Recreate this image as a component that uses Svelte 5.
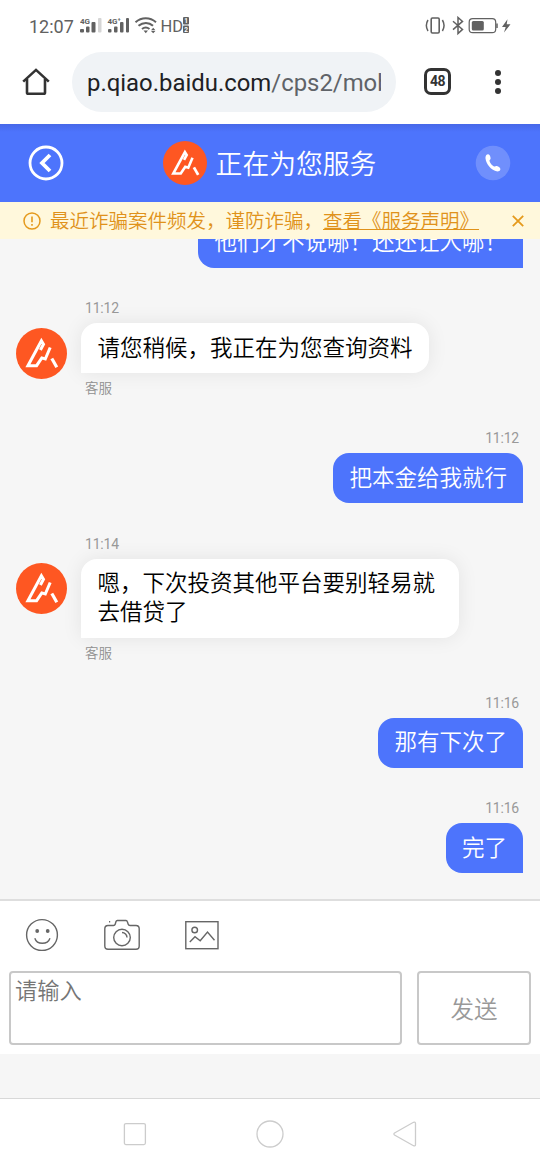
<script lang="ts">
	type Message = { from: 'agent' | 'user'; time: string; text: string };

	const messages: Message[] = [
		{ from: 'user', time: '11:12', text: '他们才不说哪！还还让人哪！' },
		{ from: 'agent', time: '11:12', text: '请您稍候，我正在为您查询资料' },
		{ from: 'user', time: '11:12', text: '把本金给我就行' },
		{ from: 'agent', time: '11:14', text: '嗯，下次投资其他平台要别轻易就去借贷了' },
		{ from: 'user', time: '11:16', text: '那有下次了' },
		{ from: 'user', time: '11:16', text: '完了' }
	];

	let draft = $state('');
</script>

{#snippet logo()}
	<svg class="logo" viewBox="0 0 51 51">
		<circle cx="25.5" cy="25.5" r="25.5" fill="#fe5722" />
		<g fill="none" stroke="#fff" stroke-width="3">
			<path d="M24.4 22L27.5 16.2L25.4 12.8L11.9 37.7H20.6L25.8 29.9L29.3 31L34.2 19.5" />
			<path d="M35.8 30.5L40.8 39.2" stroke-width="3.2" />
		</g>
	</svg>
{/snippet}

<div class="phone">
	<div class="status">
		<span class="clock">12:07</span>
		<svg class="signals" width="112" height="20" viewBox="0 0 112 20" fill="#616161">
			<text x="0" y="7.5" class="tiny">4G</text>
			<rect x="0" y="13" width="4" height="3.5" rx="1" />
			<rect x="6" y="10.5" width="3.5" height="6" rx="1" />
			<rect x="11.5" y="6" width="4" height="10.5" rx="1" />
			<rect x="18" y="2" width="3.5" height="14.5" rx="1" fill="#d5d5d5" />
			<text x="27.5" y="7.5" class="tiny">4G⁺</text>
			<rect x="28" y="13" width="3.5" height="3.5" rx="1" />
			<rect x="34" y="10.5" width="3.5" height="6" rx="1" />
			<rect x="40" y="6" width="3.5" height="10.5" rx="1" />
			<rect x="46" y="2" width="3" height="14.5" rx="1" />
			<g fill="none" stroke="#616161" stroke-width="2">
				<path d="M55.5 6.2C61.5 .9 70 .9 76 6.2" />
				<path d="M58.5 9.8C63 6 69 6 73 9.8" />
				<path d="M62 13C64.5 11 67 11 69.5 13" />
			</g>
			<path d="M63.5 14.5H68L65.8 17.3ZM71 14.2L73.2 11.8L75.4 14.2ZM71 15H75.4L73.2 17.3Z" />
			<text x="80.5" y="16" class="hd">HD</text>
			<rect x="103" y="1" width="6" height="7.5" rx="1" />
			<rect x="103" y="9.5" width="6" height="7.5" rx="1" />
			<text x="104.3" y="7.3" class="sim">1</text>
			<text x="104.3" y="15.8" class="sim">2</text>
		</svg>
		<svg class="power" width="88" height="20" viewBox="0 0 88 20" fill="none" stroke="#616161">
			<rect x="7.2" y="2" width="8" height="15" rx="1.2" stroke-width="1.6" />
			<path d="M4 4Q.7 9.5 4 15M18.4 4Q21.7 9.5 18.4 15" stroke-width="1.5" />
			<path d="M29 5.3L38.5 13.4L34 17.5V1.5L38.5 5.4L29 13.6" stroke-width="1.5" />
			<rect x="45.2" y="2.7" width="26.5" height="14" rx="3.5" stroke-width="1.2" />
			<rect x="47.8" y="5" width="12" height="9.5" rx="1.5" fill="#616161" stroke="none" />
			<path d="M73 7.5V12" stroke-width="1.5" />
			<path d="M83.5 3.3L78 11H81.7L80 16.5L86.5 8.3H82.7Z" fill="#616161" stroke="none" />
		</svg>
	</div>

	<div class="browser">
		<svg class="home" width="28" height="28" viewBox="0 0 28 28" fill="none" stroke="#333" stroke-width="2.6">
			<path d="M1.2 13.6L14 1.9L26.8 13.6" />
			<path d="M5 11V24.5Q5 25.8 6.3 25.8H21.7Q23 25.8 23 24.5V11" />
		</svg>
		<div class="address">
			<div class="url">p.qiao.baidu.com<span>/cps2/mobileChat</span></div>
		</div>
		<div class="tabs">48</div>
		<svg class="menu" width="8" height="26" viewBox="0 0 8 26" fill="#333">
			<circle cx="4" cy="4" r="3" />
			<circle cx="4" cy="13" r="3" />
			<circle cx="4" cy="22" r="3" />
		</svg>
	</div>

	<header>
		<svg width="36" height="36" viewBox="0 0 36 36" fill="none" stroke="#fff">
			<circle cx="18" cy="18" r="16" stroke-width="2.8" />
			<path d="M22 10L14 18L22 26" stroke-width="3.8" />
		</svg>
		<div class="title">
			{@render logo()}
			<h1>正在为您服务</h1>
		</div>
		<svg width="36" height="36" viewBox="0 0 36 36">
			<circle cx="18" cy="18" r="17.3" fill="#fff" opacity=".2" />
			<path
				fill="#fff"
				d="M13.2 9.2C14.8 9.2 15.5 11.5 15.6 13.6C15.6 14.8 14.3 14.8 14.5 16C14.9 18 17.2 20.6 19 21.4C20.2 21.9 20.6 20.7 21.8 20.9C23.6 21.3 25.6 22.9 25.4 24.2C25.1 25.9 23.2 26.8 21.4 26.3C16 24.7 11.3 19.2 10.5 13.4C10.2 11.4 11.3 9.2 13.2 9.2Z"
			/>
		</svg>
	</header>

	<div class="notice">
		<svg width="18" height="18" viewBox="0 0 18 18" fill="none" stroke="#e59a1c">
			<circle cx="9" cy="9" r="8" stroke-width="1.5" />
			<path d="M9 4.5V10.3M9 12V13.8" stroke-width="1.6" />
		</svg>
		<p>最近诈骗案件频发，谨防诈骗，<a href="#statement">查看《服务声明》</a></p>
		<svg class="close" width="12" height="12" viewBox="0 0 12 12" stroke="#e59a1c" stroke-width="1.8">
			<path d="M.8 .8L11.2 11.2M11.2 .8L.8 11.2" />
		</svg>
	</div>

	<main>
		{#each messages as message}
			<div class="message {message.from}">
				{#if message.from === 'agent'}
					<div class="avatar">{@render logo()}</div>
				{/if}
				<div class="body">
					<time>{message.time}</time>
					<div class="bubble">{message.text}</div>
					{#if message.from === 'agent'}
						<div class="label">客服</div>
					{/if}
				</div>
			</div>
		{/each}
	</main>

	<footer>
		<div class="tools">
			<svg width="34" height="34" viewBox="0 0 34 34" fill="none" stroke="#666" stroke-width="1.4">
				<circle cx="17" cy="17" r="15.4" />
				<path d="M9.8 20.2C12 27 22.6 27 25 20.2" />
				<circle cx="12.2" cy="13" r="1.9" fill="#666" stroke="none" />
				<circle cx="22.7" cy="13" r="1.9" fill="#666" stroke="none" />
			</svg>
			<svg width="36" height="34" viewBox="0 0 36 34" fill="none" stroke="#666" stroke-width="1.4">
				<path
					d="M4 7.5H9.5Q10.8 7.5 11.2 6.2L12 3.5Q12.3 2.5 13.3 2.5H22Q23 2.5 23.3 3.5L24.2 6.2Q24.6 7.5 26 7.5H32Q35.2 7.5 35.2 10.7V28Q35.2 31.2 32 31.2H4Q.8 31.2 .8 28V10.7Q.8 7.5 4 7.5Z"
				/>
				<path d="M5 3.8H6.2" />
				<circle cx="18" cy="19.5" r="8.3" />
				<path d="M18 14.5A5 5 0 0 1 23 19.5" />
			</svg>
			<svg width="34" height="34" viewBox="0 0 34 34" fill="none" stroke="#666" stroke-width="1.4">
				<rect x=".8" y="3.7" width="32.2" height="27" />
				<circle cx="9.7" cy="12" r="2.8" />
				<path d="M4.8 24L10 18.8L15.2 22.8L22.5 14L29.5 22.3" />
			</svg>
		</div>
		<div class="compose">
			<textarea placeholder="请输入" bind:value={draft}></textarea>
			<button>发送</button>
		</div>
	</footer>

	<nav>
		<svg width="28" height="28" viewBox="0 0 28 28">
			<rect x="3.4" y="3.6" width="21" height="21" rx="1.5" />
		</svg>
		<svg width="28" height="28" viewBox="0 0 28 28">
			<circle cx="14" cy="14" r="13" />
		</svg>
		<svg width="28" height="28" viewBox="0 0 28 28">
			<path d="M3.5 13L22.5 2.3Q24.5 1.5 24.5 3.5V24.5Q24.5 26.5 22.5 25.7L3.5 15Q2.3 14 3.5 13Z" />
		</svg>
	</nav>
</div>

<style>
	:global(body) {
		margin: 0;
		background: #f6f6f6;
	}

	.phone {
		display: flex;
		flex-direction: column;
		width: 540px;
		height: 1170px;
		overflow: hidden;
		background: #f6f6f6;
		font-family: Roboto, 'Noto Sans CJK SC', sans-serif;
	}

	svg {
		display: block;
		flex: none;
	}

	.status {
		display: flex;
		align-items: center;
		flex: none;
		height: 52px;
		padding: 0 28px 0 29px;
		box-sizing: border-box;
		background: #fff;
		color: #616161;
	}

	.clock {
		width: 51px;
		font-size: 18px;
	}

	.tiny {
		font-size: 8px;
		font-weight: 700;
	}

	.hd {
		font-size: 16.5px;
	}

	.sim {
		font-size: 6.5px;
		font-weight: 700;
		fill: #fff;
	}

	.power {
		margin-left: auto;
	}

	.browser {
		display: flex;
		flex: none;
		height: 72px;
		align-items: flex-start;
		background: #fff;
	}

	.home {
		margin: 16px 22px 0;
	}

	.address {
		width: 324px;
		height: 60px;
		padding: 0 15px;
		box-sizing: border-box;
		border-radius: 30px;
		background: #f0f3f6;
	}

	.url {
		overflow: hidden;
		white-space: nowrap;
		font-size: 23.9px;
		line-height: 62px;
		color: #202124;
	}

	.url span {
		color: #5f6368;
	}

	.tabs {
		width: 27px;
		height: 27px;
		margin: 16px 0 0 28px;
		box-sizing: border-box;
		border: 3px solid #333;
		border-radius: 7px;
		font-size: 14px;
		font-weight: 700;
		line-height: 21px;
		letter-spacing: -0.5px;
		text-align: center;
		color: #333;
	}

	.menu {
		margin: 17px 0 0 42.5px;
	}

	header {
		display: flex;
		align-items: center;
		justify-content: space-between;
		flex: none;
		height: 78px;
		padding: 0 29px 0 28px;
		box-sizing: border-box;
		background: linear-gradient(#4768e8, #4d74fc 8px);
	}

	.title {
		display: flex;
		align-items: center;
		gap: 9px;
	}

	.title .logo {
		width: 44px;
		height: 44px;
	}

	h1 {
		margin: 0;
		padding-top: 4px;
		font-size: 26.8px;
		font-weight: 350;
		line-height: 40px;
		color: #fff;
	}

	.notice {
		display: flex;
		align-items: center;
		flex: none;
		height: 37px;
		padding: 0 16px 0 23px;
		box-sizing: border-box;
		background: #fff8dc;
		color: #e0921a;
	}

	.notice p {
		margin: 0 0 0 9px;
		padding-top: 2px;
		font-size: 19.5px;
		font-weight: 350;
		line-height: 35px;
		white-space: nowrap;
	}

	.notice a {
		color: inherit;
	}

	.close {
		margin-left: auto;
	}

	main {
		display: flex;
		flex: none;
		flex-direction: column;
		justify-content: flex-end;
		gap: 31.25px;
		height: 660px;
		padding: 0 17px 25.9px 16px;
		box-sizing: border-box;
		overflow: hidden;
	}

	.message {
		display: flex;
		flex: none;
	}

	.user {
		justify-content: flex-end;
	}

	.avatar {
		width: 51px;
		height: 51px;
		margin: 28.8px 14px 0 0;
	}

	.avatar .logo {
		width: 51px;
		height: 51px;
	}

	.body {
		display: flex;
		flex-direction: column;
		align-items: flex-start;
	}

	.user .body {
		align-items: flex-end;
	}

	time {
		height: 24px;
		padding: 0 4px;
		font-size: 14px;
		line-height: 19px;
		letter-spacing: -0.2px;
		color: #999;
	}

	.bubble {
		max-width: 378px;
		padding: 10.5px 16.5px;
		box-sizing: border-box;
		border-radius: 16px 16px 16px 0;
		background: #fff;
		box-shadow: 0 0 20px rgba(0, 0, 0, 0.08);
		font-size: 22.5px;
		font-weight: 350;
		line-height: 29px;
		color: #000;
	}

	.user .bubble {
		padding: 10.5px 16px;
		border-radius: 16px 16px 0 16px;
		background: #4d74fc;
		box-shadow: none;
		color: #fff;
	}

	.label {
		height: 25px;
		padding: 0 4px;
		font-size: 13.5px;
		font-weight: 350;
		line-height: 31px;
		color: #909090;
	}

	footer {
		flex: none;
		height: 155px;
		box-sizing: border-box;
		border-top: 2px solid #dedede;
		background: #fff;
	}

	.tools {
		display: flex;
		gap: 45px;
		height: 70px;
		padding: 16.5px 25px 0;
		box-sizing: border-box;
	}

	.compose {
		display: flex;
		gap: 15px;
		padding: 0 9px;
	}

	textarea {
		width: 393px;
		height: 74px;
		padding: 2px 4px;
		box-sizing: border-box;
		border: 2px solid #c8c8c8;
		border-radius: 4px;
		font: 350 22.3px/32px Roboto, 'Noto Sans CJK SC', sans-serif;
		resize: none;
	}

	textarea::placeholder {
		color: #757575;
	}

	button {
		width: 114px;
		height: 74px;
		padding: 0;
		border: 2px solid #c8c8c8;
		border-radius: 4px;
		background: #fff;
		font: 350 23.5px Roboto, 'Noto Sans CJK SC', sans-serif;
		color: #999;
	}

	nav {
		display: flex;
		align-items: center;
		justify-content: center;
		flex: none;
		gap: 107px;
		height: 72px;
		margin-top: auto;
		padding: 0 1px 2px 0;
		box-sizing: border-box;
		border-top: 1px solid #d8d8d8;
		background: #fff;
	}

	nav svg {
		fill: none;
		stroke: #ccc;
		stroke-width: 1.3;
	}
</style>
